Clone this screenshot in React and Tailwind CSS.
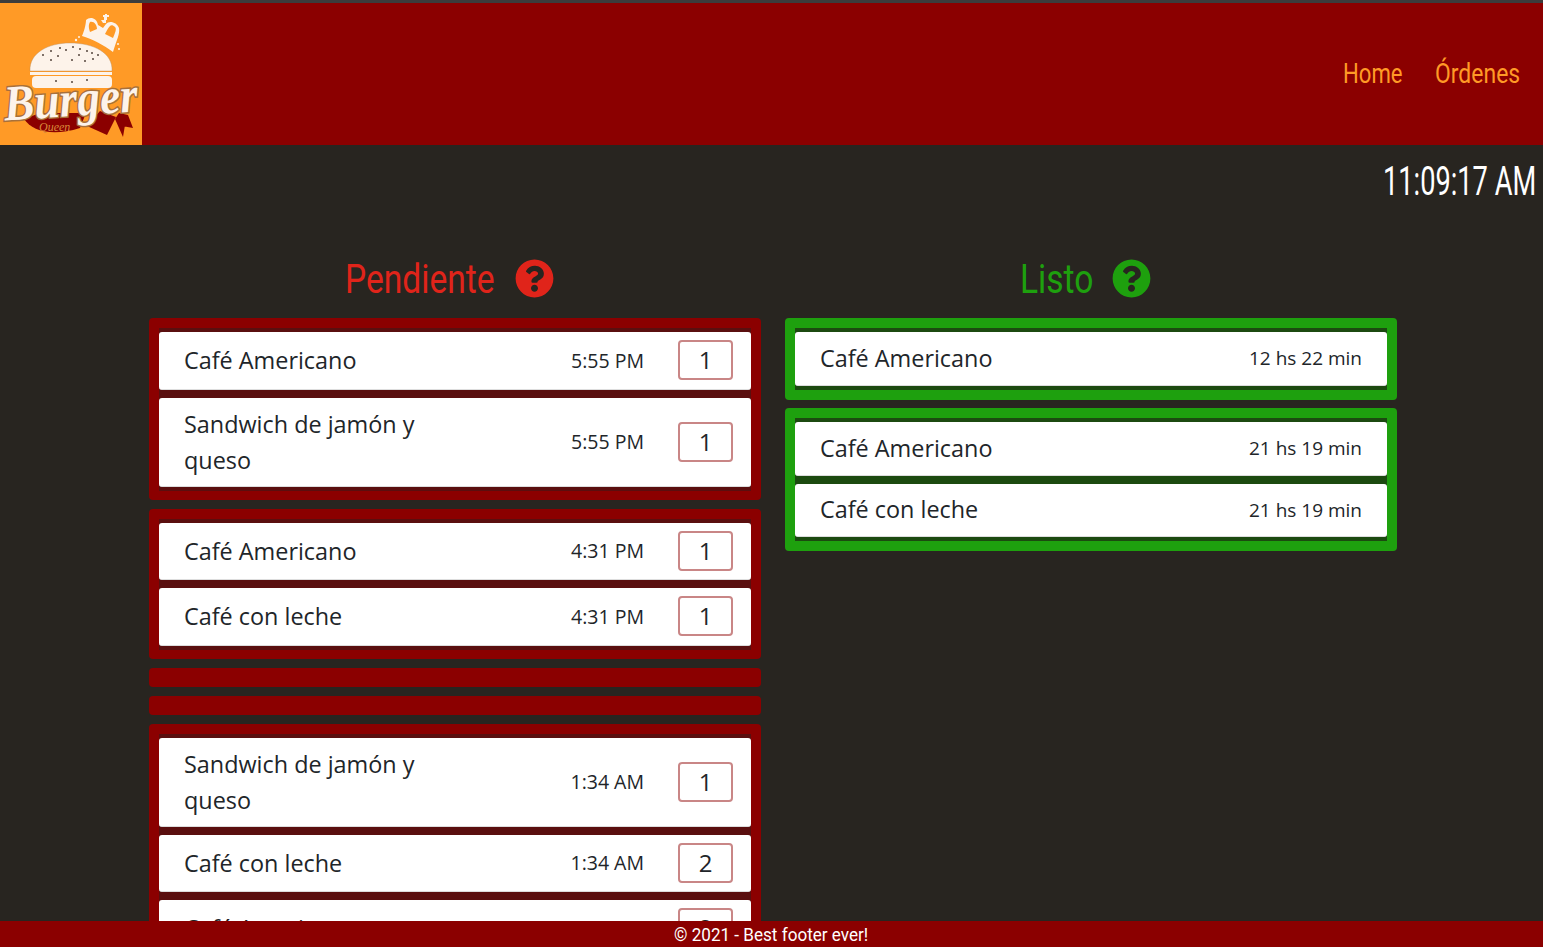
import { FaQuestionCircle } from 'react-icons/fa'

const pending = [
  [
    { name: 'Café Americano', time: '5:55 PM', qty: 1 },
    { name: 'Sandwich de jamón y queso', time: '5:55 PM', qty: 1 },
  ],
  [
    { name: 'Café Americano', time: '4:31 PM', qty: 1 },
    { name: 'Café con leche', time: '4:31 PM', qty: 1 },
  ],
  [],
  [],
  [
    { name: 'Sandwich de jamón y queso', time: '1:34 AM', qty: 1 },
    { name: 'Café con leche', time: '1:34 AM', qty: 2 },
    { name: 'Café Americano', time: '1:34 AM', qty: 2 },
  ],
]

const ready = [
  [{ name: 'Café Americano', time: '12 hs 22 min' }],
  [
    { name: 'Café Americano', time: '21 hs 19 min' },
    { name: 'Café con leche', time: '21 hs 19 min' },
  ],
]

const Logo = () => {
  return (
    <svg viewBox="0 0 142 142" className="w-[142px] h-[142px] shrink-0">
      <rect width="142" height="142" fill="#ff9a26" />
      {/* crown */}
      <path d="M82 33 C85 26 86 20 86 17 C90 13 97 15 98 22 L103 25 L106 21 C109 17 117 19 119 25 C120 31 117 36 113 49 C104 42 92 36 82 33 Z" fill="#fdf3ea" />
      <path d="M90 19 C88 22 89 26 90 29 L97 26 C97 22 94 18 90 19 Z M110 23 C108 25 106 29 105 31 L113 35 C115 30 117 26 115 24 C113 22 111 22 110 23 Z" fill="#ff9a26" />
      <path d="M101 17 h3 v-3 h-1 v-2 h2 v-1 h2 v1 h2 v2 h-2 v3 h-1 v3 h-3 z" fill="#fdf3ea" />
      <circle cx="76" cy="37" r="1.2" fill="#fdf3ea" />
      <circle cx="79" cy="34" r="1" fill="#fdf3ea" />
      <circle cx="118" cy="41" r="1" fill="#fdf3ea" />
      <circle cx="119" cy="46" r="1" fill="#fdf3ea" />
      {/* burger */}
      <path d="M30 68 C29 50 48 40 70 40 C94 40 113 50 112 68 Z" fill="#fdf3ea" stroke="#b98a5a" strokeWidth="0.4" />
      <rect x="30" y="69" width="82" height="3" fill="#fdf3ea" />
      <rect x="32" y="73" width="80" height="12" rx="4" fill="#fdf3ea" />
      <g fill="#55463c">
        <circle cx="43" cy="52" r="1" /><circle cx="51" cy="48" r="1" /><circle cx="60" cy="45" r="1" />
        <circle cx="66" cy="47" r="1" /><circle cx="73" cy="44" r="1" /><circle cx="80" cy="46" r="1" />
        <circle cx="87" cy="48" r="1" /><circle cx="92" cy="50" r="1" /><circle cx="98" cy="52" r="1" />
        <circle cx="58" cy="53" r="1" /><circle cx="72" cy="57" r="1" /><circle cx="85" cy="58" r="1" />
        <circle cx="51" cy="57" r="1" /><circle cx="93" cy="56" r="1" /><circle cx="79" cy="52" r="1" />
        <circle cx="56" cy="78" r="1" /><circle cx="72" cy="79" r="1" /><circle cx="87" cy="77" r="1" />
      </g>
      {/* ribbon */}
      <path d="M24 116 C32 128 52 134 80 125 L86 110 L40 110 Z" fill="#8b0000" />
      <path d="M87 123 L107 132 L116 114 L100 108 Z" fill="#8b0000" />
      <path d="M115 116 L122 123 L133 125 L128 112 L119 110 Z M115 116 L123 134 L125 122 Z" fill="#8b0000" />
      <text x="39" y="128" fontFamily="'Liberation Serif', serif" fontStyle="italic" fontSize="12" fill="#d98a3a">Queen</text>
      <text x="4" y="113" fontFamily="'Liberation Serif', serif" fontStyle="italic" fontWeight="700" fontSize="50" textLength="134" lengthAdjust="spacingAndGlyphs" fill="#fdf3ea" stroke="#a8703a" strokeWidth="3" paintOrder="stroke" transform="rotate(-4 70 100)">Burger</text>
    </svg>
  )
}

// the reference font is condensed, so the text is squeezed inside a fixed box
const Narrow = ({ width, scale, children }) => {
  return (
    <span className={`inline-block whitespace-nowrap ${width}`}>
      <span className={`inline-block origin-left ${scale}`}>{children}</span>
    </span>
  )
}

const PendingRow = ({ item }) => {
  return (
    <li className="flex items-center bg-white rounded-[3px] min-h-[57.5px] pl-[25px] pr-[18px] py-[8px] border-b border-[#ddd]">
      <span className="w-[290px] mr-auto text-[23.4px] leading-[36px] text-[#212529]">{item.name}</span>
      <span className="text-[19.5px] text-[#212529] mr-[34px]">{item.time}</span>
      <span className="w-[55px] h-[40px] flex items-center justify-center border-2 border-[#c98686] rounded-[4px] text-[24px] text-[#212529]">
        {item.qty}
      </span>
    </li>
  )
}

const ReadyRow = ({ item }) => {
  return (
    <li className="flex items-center justify-between bg-white rounded-[3px] px-[25px] h-[53.6px] border-b border-[#ddd]">
      <span className="text-[23.4px] text-[#212529]">{item.name}</span>
      <span className="text-[19px] text-[#212529]">{item.time}</span>
    </li>
  )
}

const Column = ({ title, titleColor, titleWidth, titleScale, groups, groupBg, groupPad, listBg, Row }) => {
  return (
    <div className="w-[612px]">
      <div className="h-[77px] pb-[2px] pr-[11px] flex items-center justify-center gap-[20px]">
        <h2 className={`text-[40px] leading-[48px] mt-[2px] font-['Roboto',sans-serif] ${titleColor}`}>
          <Narrow width={titleWidth} scale={titleScale}>{title}</Narrow>
        </h2>
        <FaQuestionCircle className={`text-[39px] ${titleColor}`} />
      </div>
      <div className="flex flex-col gap-[8.5px]">
        {groups.map((group, i) => (
          <div key={i} className={`${groupBg} rounded-[4px] ${group.length ? groupPad : 'h-[19.5px]'}`}>
            {group.length > 0 && (
              <ul className={`${listBg} py-[4px] flex flex-col gap-[8px]`}>
                {group.map((item, j) => (
                  <Row key={j} item={item} />
                ))}
              </ul>
            )}
          </div>
        ))}
      </div>
    </div>
  )
}

export default function App() {
  return (
    <div className="h-screen flex flex-col overflow-hidden bg-[#282520] font-['Open_Sans',sans-serif]">
      <div className="h-[3px] bg-[#3c3c3c]" />
      <header className="h-[142px] bg-[#8b0000] flex items-center justify-between pr-[22px] shrink-0">
        <Logo />
        <nav className="flex gap-[32px] text-[27px] text-[#ff9a26] font-['Roboto',sans-serif]">
          <a href="#"><Narrow width="w-[60px]" scale="scale-x-[0.82]">Home</Narrow></a>
          <a href="#"><Narrow width="w-[86px]" scale="scale-x-[0.85]">Órdenes</Narrow></a>
        </nav>
      </header>
      <main className="flex-1 min-h-0 overflow-hidden">
        <div className="flex justify-end pr-[6px] pt-[13px] h-[96px] text-[40px] leading-[48px] text-white font-['Roboto',sans-serif]">
          <Narrow width="w-[154px]" scale="scale-x-[0.68]">11:09:17 AM</Narrow>
        </div>
        <div className="flex gap-[24px] pl-[149px]">
          <Column title="Pendiente" titleColor="text-[#e0241a]" titleWidth="w-[150px]" titleScale="scale-x-[0.84]" groups={pending} groupBg="bg-[#8b0000]" groupPad="px-[10px] pt-[10px] pb-[9.5px]" listBg="bg-[#5a0f0f]" Row={PendingRow} />
          <Column title="Listo" titleColor="text-[#1ea00e]" titleWidth="w-[72px]" titleScale="scale-x-[0.84]" groups={ready} groupBg="bg-[#1ea00e]" groupPad="p-[10px]" listBg="bg-[#1c4a10]" Row={ReadyRow} />
        </div>
      </main>
      <footer className="h-[26px] shrink-0 bg-[#8b0000] flex justify-center text-white text-[19px] leading-[28px] font-['Roboto',sans-serif]">
        <Narrow width="w-[196px]" scale="scale-x-[0.9]">© 2021 - Best footer ever!</Narrow>
      </footer>
    </div>
  )
}
